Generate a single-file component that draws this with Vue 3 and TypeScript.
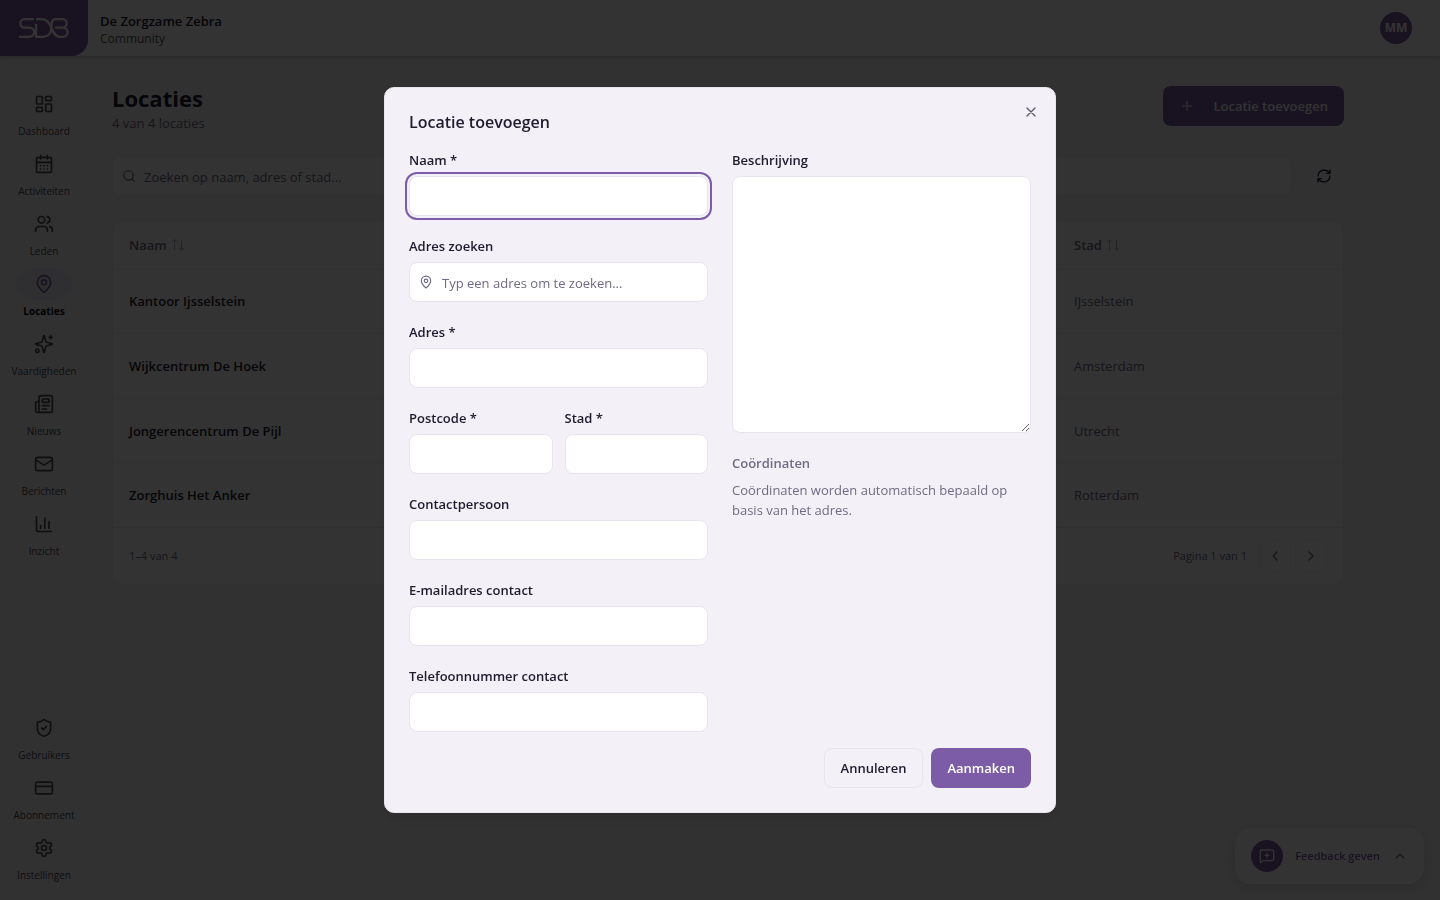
<script setup lang="ts">
import { ref } from 'vue'

interface Shape { tag: string; attrs: Record<string, string | number> }
interface NavItem { label: string; icon: string; active?: boolean }
interface Location { name: string; city: string }

const p = (d: string): Shape => ({ tag: 'path', attrs: { d } })
const c = (cx: number, cy: number, r: number): Shape => ({ tag: 'circle', attrs: { cx, cy, r } })
const r = (x: number, y: number, width: number, height: number, rx: number): Shape => ({ tag: 'rect', attrs: { x, y, width, height, rx } })

const icons: Record<string, Shape[]> = {
  dashboard: [r(3, 3, 7, 9, 1), r(14, 3, 7, 5, 1), r(14, 12, 7, 9, 1), r(3, 16, 7, 5, 1)],
  calendar: [p('M8 2v4M16 2v4M3 10h18M8 14h.01M12 14h.01M16 14h.01M8 18h.01M12 18h.01M16 18h.01'), r(3, 4, 18, 18, 2)],
  users: [p('M16 21v-2a4 4 0 0 0-4-4H6a4 4 0 0 0-4 4v2M22 21v-2a4 4 0 0 0-3-3.87M16 3.13a4 4 0 0 1 0 7.75'), c(9, 7, 4)],
  pin: [p('M20 10c0 4.993-5.539 10.193-7.399 11.799a1 1 0 0 1-1.202 0C9.539 20.193 4 14.993 4 10a8 8 0 0 1 16 0'), c(12, 10, 3)],
  sparkles: [p('M9.937 15.5A2 2 0 0 0 8.5 14.063l-6.135-1.582a.5.5 0 0 1 0-.962L8.5 9.936A2 2 0 0 0 9.937 8.5l1.582-6.135a.5.5 0 0 1 .963 0L14.063 8.5A2 2 0 0 0 15.5 9.937l6.135 1.581a.5.5 0 0 1 0 .964L15.5 14.063a2 2 0 0 0-1.437 1.437l-1.582 6.135a.5.5 0 0 1-.963 0zM20 2v4M22 4h-4'), c(4, 20, 2)],
  news: [p('M15 18h-5M18 14h-8M4 22h16a2 2 0 0 0 2-2V4a2 2 0 0 0-2-2H8a2 2 0 0 0-2 2v16a2 2 0 0 1-4 0v-9a2 2 0 0 1 2-2h2'), r(10, 6, 8, 4, 1)],
  mail: [r(2, 4, 20, 16, 2), p('m22 7-8.991 5.727a2 2 0 0 1-2.009 0L2 7')],
  chart: [p('M3 3v16a2 2 0 0 0 2 2h16M18 17V9M13 17V5M8 17v-3')],
  shield: [p('M20 13c0 5-3.5 7.5-7.66 8.95a1 1 0 0 1-.67-.01C7.5 20.5 4 18 4 13V6a1 1 0 0 1 1-1c2 0 4.5-1.2 6.24-2.72a1.17 1.17 0 0 1 1.52 0C14.51 3.81 17 5 19 5a1 1 0 0 1 1 1zM9 12l2 2 4-4')],
  card: [r(2, 5, 20, 14, 2), p('M2 10h20')],
  settings: [p('M9.671 4.136a2.34 2.34 0 0 1 4.659 0 2.34 2.34 0 0 0 3.319 1.915 2.34 2.34 0 0 1 2.33 4.033 2.34 2.34 0 0 0 0 3.831 2.34 2.34 0 0 1-2.33 4.033 2.34 2.34 0 0 0-3.319 1.915 2.34 2.34 0 0 1-4.659 0 2.34 2.34 0 0 0-3.32-1.915 2.34 2.34 0 0 1-2.33-4.033 2.34 2.34 0 0 0 0-3.831A2.34 2.34 0 0 1 6.35 6.051a2.34 2.34 0 0 0 3.319-1.915'), c(12, 12, 3)]
}

const mainNav: NavItem[] = [
  { label: 'Dashboard', icon: 'dashboard' },
  { label: 'Activiteiten', icon: 'calendar' },
  { label: 'Leden', icon: 'users' },
  { label: 'Locaties', icon: 'pin', active: true },
  { label: 'Vaardigheden', icon: 'sparkles' },
  { label: 'Nieuws', icon: 'news' },
  { label: 'Berichten', icon: 'mail' },
  { label: 'Inzicht', icon: 'chart' }
]
const adminNav: NavItem[] = [
  { label: 'Gebruikers', icon: 'shield' },
  { label: 'Abonnement', icon: 'card' },
  { label: 'Instellingen', icon: 'settings' }
]
const navGroups = [mainNav, adminNav]

const locations: Location[] = [
  { name: 'Kantoor Ijsselstein', city: 'IJsselstein' },
  { name: 'Wijkcentrum De Hoek', city: 'Amsterdam' },
  { name: 'Jongerencentrum De Pijl', city: 'Utrecht' },
  { name: 'Zorghuis Het Anker', city: 'Rotterdam' }
]

const query = ref('')
const form = ref({ name: '', search: '', address: '', zip: '', city: '', contact: '', email: '', phone: '', description: '' })
</script>

<template>
  <div class="app">
    <header class="topbar">
      <a class="logo" href="#" aria-label="SDB">
        <svg width="50" height="20" viewBox="0 0 50 20" fill="none" stroke="currentColor" stroke-width="2.300" stroke-linejoin="round">
          <path d="M15 1.200H5.500a4.200 4.200 0 0 0 0 8.400h5a4.600 4.600 0 0 1 0 9.200H0" />
          <path d="M17 1.200h6c5 0 7 3 9 7.800s4 9.800 8.500 9.800h3.500a4.600 4.600 0 0 0 0-9.200h-6M36 9.600h7.500a4.200 4.200 0 0 0 0-8.400H37c-3 0-4.500 2.300-4.500 5.800v2.500c0 5-3 9.300-9 9.300h-6.500V6" />
        </svg>
      </a>
      <div class="org">
        <strong>De Zorgzame Zebra</strong>
        <span>Community</span>
      </div>
      <button class="avatar" type="button">MM</button>
    </header>

    <div class="body">
      <nav class="sidebar">
        <div v-for="(group, i) in navGroups" :key="i" class="nav-group">
          <a v-for="item in group" :key="item.label" href="#" class="nav-item" :class="{ active: item.active }">
            <span class="pill">
              <svg class="icon" width="20" height="20" viewBox="0 0 24 24">
                <component :is="s.tag" v-for="(s, n) in icons[item.icon]" :key="n" v-bind="s.attrs" />
              </svg>
            </span>
            <span class="nav-label">{{ item.label }}</span>
          </a>
        </div>
      </nav>

      <main class="content">
        <div class="page-head">
          <div>
            <h1>Locaties</h1>
            <p>4 van 4 locaties</p>
          </div>
          <button class="btn primary add" type="button">
            <svg class="icon thin" width="16" height="16" viewBox="0 0 24 24"><path d="M5 12h14M12 5v14" /></svg>
            Locatie toevoegen
          </button>
        </div>

        <div class="toolbar">
          <div class="search">
            <svg class="icon" width="14" height="14" viewBox="0 0 24 24"><circle cx="11" cy="11" r="8" /><path d="m21 21-4.300-4.300" /></svg>
            <input v-model="query" type="text" aria-label="Zoeken" placeholder="Zoeken op naam, adres of stad..." />
          </div>
          <button class="refresh" type="button" aria-label="Vernieuwen">
            <svg class="icon" width="16" height="16" viewBox="0 0 24 24"><path d="M3 12a9 9 0 0 1 9-9 9.750 9.750 0 0 1 6.740 2.740L21 8M21 3v5h-5M21 12a9 9 0 0 1-9 9 9.750 9.750 0 0 1-6.740-2.740L3 16M8 16H3v5" /></svg>
          </button>
        </div>

        <section class="card">
          <table>
            <thead>
              <tr>
                <th v-for="head in ['Naam', 'Stad']" :key="head" scope="col">
                  <button type="button" class="sort">
                    {{ head }}
                    <svg class="icon thin" width="14" height="14" viewBox="0 0 24 24"><path d="m22 17-4 4-4-4M18 21V3M2 7l4-4 4 4M6 3v18" /></svg>
                  </button>
                </th>
              </tr>
            </thead>
            <tbody>
              <tr v-for="loc in locations" :key="loc.name">
                <td class="name">{{ loc.name }}</td>
                <td class="city">{{ loc.city }}</td>
              </tr>
            </tbody>
          </table>
          <footer class="pager">
            <span class="range">1–4 van 4</span>
            <span class="page">Pagina 1 van 1</span>
            <button type="button" aria-label="Vorige"><svg class="icon" width="16" height="16" viewBox="0 0 24 24"><path d="m15 18-6-6 6-6" /></svg></button>
            <button type="button" aria-label="Volgende"><svg class="icon" width="16" height="16" viewBox="0 0 24 24"><path d="m9 18 6-6-6-6" /></svg></button>
          </footer>
        </section>
      </main>
    </div>

    <button class="feedback" type="button">
      <span class="feedback-icon">
        <svg class="icon" width="16" height="16" viewBox="0 0 24 24"><path d="M22 17a2 2 0 0 1-2 2H6.828a2 2 0 0 0-1.414.586l-2.202 2.202A.71.71 0 0 1 2 21.286V5a2 2 0 0 1 2-2h16a2 2 0 0 1 2 2zM12 8v6M9 11h6" /></svg>
      </span>
      Feedback geven
      <svg class="icon chevron" width="16" height="16" viewBox="0 0 24 24"><path d="m18 15-6-6-6 6" /></svg>
    </button>

    <div class="overlay">
      <form class="dialog" role="dialog" aria-modal="true" aria-labelledby="dialog-title" @submit.prevent>
        <button class="close" type="button" aria-label="Sluiten">
          <svg class="icon" width="16" height="16" viewBox="0 0 24 24"><path d="M18 6 6 18M6 6l12 12" /></svg>
        </button>
        <h2 id="dialog-title">Locatie toevoegen</h2>
        <div class="columns">
          <div class="fields">
            <div class="field">
              <label for="f-name">Naam *</label>
              <input id="f-name" v-model="form.name" class="focused" type="text" />
            </div>
            <div class="field">
              <label for="f-search">Adres zoeken</label>
              <div class="with-icon">
                <svg class="icon" width="14" height="14" viewBox="0 0 24 24">
                  <component :is="s.tag" v-for="(s, n) in icons.pin" :key="n" v-bind="s.attrs" />
                </svg>
                <input id="f-search" v-model="form.search" type="text" placeholder="Typ een adres om te zoeken..." />
              </div>
            </div>
            <div class="field">
              <label for="f-address">Adres *</label>
              <input id="f-address" v-model="form.address" type="text" />
            </div>
            <div class="pair">
              <div class="field">
                <label for="f-zip">Postcode *</label>
                <input id="f-zip" v-model="form.zip" type="text" />
              </div>
              <div class="field">
                <label for="f-city">Stad *</label>
                <input id="f-city" v-model="form.city" type="text" />
              </div>
            </div>
            <div class="field">
              <label for="f-contact">Contactpersoon</label>
              <input id="f-contact" v-model="form.contact" type="text" />
            </div>
            <div class="field">
              <label for="f-email">E-mailadres contact</label>
              <input id="f-email" v-model="form.email" type="email" />
            </div>
            <div class="field">
              <label for="f-phone">Telefoonnummer contact</label>
              <input id="f-phone" v-model="form.phone" type="tel" />
            </div>
          </div>
          <div class="fields">
            <div class="field">
              <label for="f-description">Beschrijving</label>
              <textarea id="f-description" v-model="form.description"></textarea>
            </div>
            <div class="coords">
              <h3>Coördinaten</h3>
              <p>Coördinaten worden automatisch bepaald op basis van het adres.</p>
            </div>
          </div>
        </div>
        <div class="actions">
          <button class="btn outline" type="button">Annuleren</button>
          <button class="btn primary" type="submit">Aanmaken</button>
        </div>
      </form>
    </div>
  </div>
</template>

<style>
body {
  margin: 0;
}
</style>

<style scoped>
.app {
  --primary: #7c5ca6;
  --ink: #1f1a2e;
  --muted: #716a83;
  --line: #e7e4ed;
  --soft-line: #eeecf2;
  position: relative;
  display: flex;
  flex-direction: column;
  min-height: 100vh;
  background: #f5f4fa;
  color: var(--ink);
  font-family: "Segoe UI", "Open Sans", "Noto Sans", sans-serif;
  font-size: 13px;
  line-height: 20px;
}
.app *,
.app *::before {
  box-sizing: border-box;
}
button,
input,
textarea {
  font: inherit;
  color: inherit;
  margin: 0;
}
button {
  cursor: pointer;
}
a {
  color: inherit;
  text-decoration: none;
}
h1,
h2,
h3,
p {
  margin: 0;
}
.icon {
  flex: none;
  fill: none;
  stroke: currentColor;
  stroke-width: 2;
  stroke-linecap: round;
  stroke-linejoin: round;
}
.icon.thin {
  stroke-width: 1.5;
}

.topbar {
  display: flex;
  align-items: center;
  gap: 12px;
  height: 56px;
  padding-right: 28px;
  background: #fff;
  box-shadow: 0 1px 4px rgba(0, 0, 0, 0.25);
  z-index: 1;
}
.logo {
  display: flex;
  align-items: center;
  justify-content: center;
  width: 88px;
  height: 56px;
  border-bottom-right-radius: 16px;
  background: var(--primary);
  color: #fff;
}
.org {
  display: flex;
  flex-direction: column;
  flex: 1;
  padding-top: 4px;
  line-height: 18px;
}
.org strong {
  font-weight: 600;
}
.org span {
  font-size: 12px;
  color: #555;
}
.avatar {
  width: 32px;
  height: 32px;
  padding: 0;
  border: 0;
  border-radius: 50%;
  background: var(--primary);
  color: #fff;
  font-size: 12px;
  font-weight: 700;
}

.body {
  display: flex;
  flex: 1;
}
.sidebar {
  display: flex;
  flex-direction: column;
  justify-content: space-between;
  width: 88px;
  padding-top: 24px;
}
.nav-group {
  padding: 8px 0;
}
.nav-group + .nav-group {
  border-top: 1px solid var(--soft-line);
  padding-top: 7px;
}
.nav-item {
  display: flex;
  flex-direction: column;
  align-items: center;
  gap: 4px;
  padding-bottom: 10px;
  color: #4a4a4e;
}
.pill {
  display: flex;
  align-items: center;
  justify-content: center;
  width: 56px;
  height: 32px;
  border-radius: 16px;
}
.nav-label {
  font-size: 10px;
  line-height: 14px;
}
.nav-item.active .pill {
  background: #e8e6ee;
  color: var(--primary);
}
.nav-item.active .nav-label {
  color: #000;
  font-weight: 700;
}

.content {
  flex: 1;
  min-width: 0;
  padding: 30px 96px 24px 24px;
}
.page-head {
  display: flex;
  justify-content: space-between;
  align-items: flex-start;
}
h1 {
  font-size: 22px;
  line-height: 24px;
  font-weight: 700;
}
.page-head p {
  margin-top: 3px;
  color: var(--muted);
}
.btn {
  display: inline-flex;
  align-items: center;
  justify-content: center;
  height: 40px;
  padding: 0 16px;
  border: 0;
  border-radius: 8px;
  font-weight: 600;
}
.btn.primary {
  background: var(--primary);
  color: #fff;
}
.btn.outline {
  background: transparent;
  border: 1px solid var(--line);
}
.btn.add {
  gap: 18px;
}
.toolbar {
  display: flex;
  gap: 12px;
  margin-bottom: 24px;
  padding-top: 23px;
}
.search {
  flex: 1;
  display: flex;
  align-items: center;
  gap: 8px;
  height: 40px;
  padding: 0 9px;
  background: #fff;
  border: 1px solid var(--soft-line);
  border-radius: 8px;
  color: var(--muted);
}
.search input {
  flex: 1;
  min-width: 0;
  padding: 1px 0 0;
  border: 0;
  outline: 0;
  background: transparent;
}
input::placeholder {
  color: var(--muted);
  opacity: 1;
}
.refresh {
  display: flex;
  align-items: center;
  justify-content: center;
  width: 40px;
  height: 40px;
  padding: 0;
  background: transparent;
  border: 1px solid var(--soft-line);
  border-radius: 8px;
}
.page-head {
  height: 47px;
}
.card {
  background: #fff;
  border: 1px solid var(--soft-line);
  border-radius: 12px;
}
table {
  width: 100%;
  height: 307px;
  border-collapse: collapse;
  table-layout: fixed;
}
thead tr {
  height: 48px;
}
tr {
  border-bottom: 1px solid var(--soft-line);
}
th,
td {
  padding: 0 16px;
  text-align: left;
}
th:last-child {
  width: 285px;
}
.sort {
  display: flex;
  align-items: center;
  gap: 4px;
  padding: 0;
  border: 0;
  background: none;
  font-weight: 600;
  color: var(--muted);
}
.sort .icon {
  opacity: 0.6;
}
.name {
  font-weight: 600;
}
.city {
  color: var(--muted);
}
.pager {
  display: flex;
  align-items: center;
  gap: 4px;
  padding: 12px 16px;
  font-size: 11px;
  color: var(--muted);
}
.range {
  flex: 1;
}
.page {
  margin-right: 8px;
}
.pager button {
  display: flex;
  align-items: center;
  justify-content: center;
  width: 32px;
  height: 32px;
  padding: 0;
  background: transparent;
  border: 1px solid #f5f4f8;
  border-radius: 8px;
}

.feedback {
  position: fixed;
  right: 16px;
  bottom: 16px;
  display: flex;
  align-items: center;
  gap: 12px;
  height: 56px;
  padding: 0 16px;
  border: 0;
  border-radius: 16px;
  background: #fff;
  color: var(--primary);
  font-size: 11px;
  font-weight: 600;
  box-shadow: 0 4px 16px rgba(0, 0, 0, 0.12);
}
.feedback-icon {
  display: flex;
  align-items: center;
  justify-content: center;
  width: 32px;
  height: 32px;
  border-radius: 50%;
  background: var(--primary);
  color: #fff;
}
.chevron {
  color: var(--muted);
}

.overlay {
  position: fixed;
  inset: 0;
  z-index: 10;
  display: flex;
  align-items: center;
  justify-content: center;
  background: rgba(0, 0, 0, 0.8);
}
.dialog {
  position: relative;
  width: 100%;
  max-width: 672px;
  padding: 24px;
  border: 1px solid var(--line);
  border-radius: 10px;
  background: #f3f1f7;
  box-shadow: 0 10px 15px -3px rgba(0, 0, 0, 0.1);
}
.close {
  position: absolute;
  top: 16px;
  right: 16px;
  display: flex;
  padding: 0;
  border: 0;
  background: none;
  opacity: 0.7;
}
h2 {
  margin-bottom: 18px;
  font-size: 16px;
  line-height: 20px;
  font-weight: 600;
}
.columns {
  display: grid;
  grid-template-columns: 1fr 1fr;
  gap: 24px;
}
.fields {
  display: flex;
  flex-direction: column;
  gap: 20px;
  min-width: 0;
}
.pair {
  display: grid;
  grid-template-columns: 1fr 1fr;
  gap: 12px;
}
.field {
  display: flex;
  flex-direction: column;
  gap: 6px;
  min-width: 0;
}
.field label {
  font-weight: 600;
}
.field input,
.field textarea {
  width: 100%;
  height: 40px;
  padding: 1px 12px 0;
  border: 1px solid var(--line);
  border-radius: 8px;
  background: #fff;
  outline: 0;
}
.field textarea {
  display: block;
  height: 257px;
  padding: 8px 12px;
  resize: vertical;
}
.field input.focused {
  box-shadow: 0 0 0 2px #f3f1f7, 0 0 0 4px var(--primary);
}
.with-icon {
  position: relative;
}
.with-icon .icon {
  position: absolute;
  left: 10px;
  top: 13px;
  color: var(--muted);
}
.field .with-icon input {
  padding-left: 32px;
}
.coords {
  color: var(--muted);
}
.coords h3 {
  margin-bottom: 7px;
  font-size: 13px;
  font-weight: 600;
}
.actions {
  display: flex;
  justify-content: flex-end;
  gap: 8px;
  margin-top: 16px;
}
</style>
